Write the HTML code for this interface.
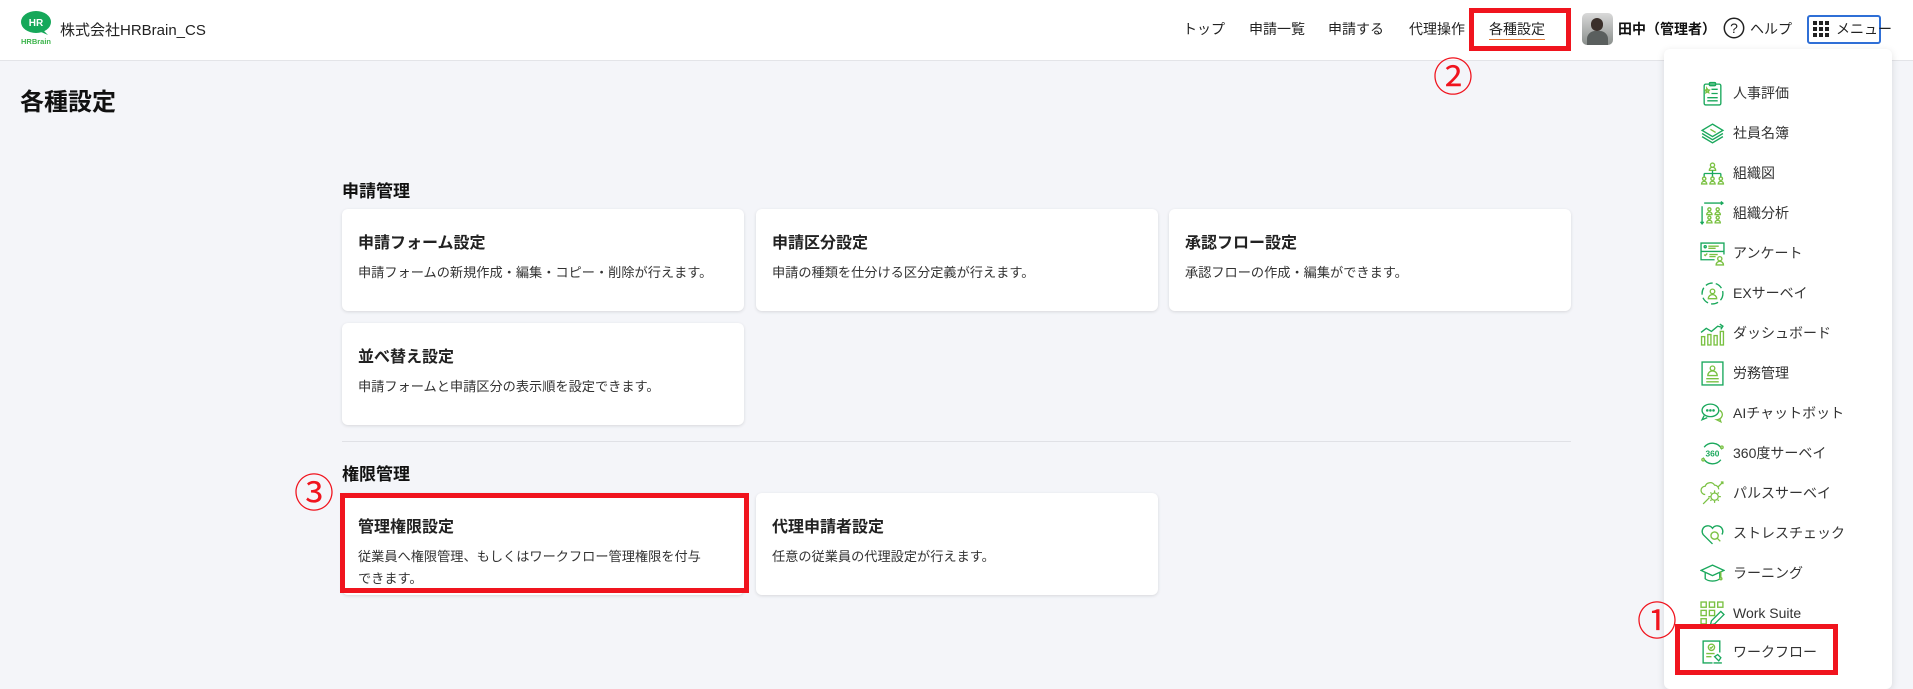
<!DOCTYPE html>
<html><head><meta charset="utf-8">
<style>
*{box-sizing:border-box;margin:0;padding:0}
body{width:1913px;height:675px;overflow:hidden;background:#f4f5f9;font-family:"Liberation Sans","Noto Sans CJK JP",sans-serif;color:#222;position:relative}
.hdr{position:absolute;left:0;top:0;width:1913px;height:61px;background:#fff;border-bottom:1px solid #e3e4e8}
.abs{position:absolute;white-space:nowrap}
.nav{font-size:14px;color:#222;top:19px}
h1{position:absolute;left:20px;top:82px;font-size:24px;font-weight:bold;color:#111}
.sec{position:absolute;font-size:17px;font-weight:bold;color:#111}
.card{position:absolute;background:#fff;border-radius:6px;box-shadow:0 1px 3px rgba(0,0,0,.12);width:402px;height:102px;padding:20px 16px}
.card b{display:block;font-size:16px;color:#222;margin-bottom:9px}
.card p{font-size:13.2px;color:#333;line-height:22px}
.red{position:absolute;border:5px solid #f0141e}
.circ{position:absolute;color:#f0141e;font-size:40px;line-height:1;font-family:"Noto Sans CJK JP",sans-serif}
.menu{position:absolute;left:1664px;top:49px;width:228px;height:640px;background:#fff;border-radius:6px;box-shadow:0 2px 8px rgba(0,0,0,.12)}
.mi{position:absolute;left:1700px;height:28px;display:flex;align-items:center;font-size:14px;color:#333;white-space:nowrap}
.mi svg{width:25px;height:25px;margin-right:8px;flex:none}
</style></head><body>
<div class="hdr"></div>
<svg class="abs" style="left:19px;top:10px" width="34" height="36" viewBox="0 0 34 36"><ellipse cx="17" cy="12" rx="15" ry="11" fill="#16a85a"/><path d="M24 20 L29 25 L22 22z" fill="#16a85a"/><text x="17" y="16" font-size="10" font-weight="bold" fill="#fff" text-anchor="middle" font-family="Liberation Sans">HR</text><text x="17" y="34" font-size="7.5" font-weight="bold" fill="#3cb44b" text-anchor="middle" font-family="Liberation Sans">HRBrain</text></svg>
<div class="abs" style="left:60px;top:19px;font-size:15px;color:#222">株式会社HRBrain_CS</div>

<div class="abs nav" style="left:1183px">トップ</div>
<div class="abs nav" style="left:1249px">申請一覧</div>
<div class="abs nav" style="left:1328px">申請する</div>
<div class="abs nav" style="left:1409px">代理操作</div>
<div class="abs nav" style="left:1489px">各種設定</div>
<div class="abs" style="left:1489px;top:39px;width:56px;height:1px;background:#e07a3a"></div>
<div class="abs" style="left:1566px;top:15px;width:1px;height:30px;background:#ddd"></div>
<div class="abs" style="left:1582px;top:13px;width:31px;height:32px;border-radius:5px;background:linear-gradient(#d9d9d9,#8a8f8c);overflow:hidden"><div style="position:absolute;left:9px;top:5px;width:12px;height:13px;border-radius:6px;background:#3a2f2a"></div><div style="position:absolute;left:5px;top:18px;width:21px;height:16px;border-radius:8px 8px 0 0;background:#5a5f5e"></div></div>
<div class="abs" style="left:1618px;top:19px;font-size:14px;font-weight:bold;color:#111">田中（管理者）</div>
<svg class="abs" style="left:1723px;top:17px" width="22" height="22" viewBox="0 0 22 22"><circle cx="11" cy="11" r="9.7" fill="none" stroke="#222" stroke-width="1.5"/><text x="11" y="16" font-size="14" text-anchor="middle" fill="#222" font-family="Liberation Sans">?</text></svg>
<div class="abs nav" style="left:1750px">ヘルプ</div>
<div class="abs" style="left:1807px;top:15px;width:74px;height:29px;border:2px solid #2f6fd6;border-radius:3px;background:#fff"></div>
<svg class="abs" style="left:1813px;top:21px" width="16" height="16" viewBox="0 0 16 16" fill="#222"><rect x="0" y="0" width="4" height="4"/><rect x="6" y="0" width="4" height="4"/><rect x="12" y="0" width="4" height="4"/><rect x="0" y="6" width="4" height="4"/><rect x="6" y="6" width="4" height="4"/><rect x="12" y="6" width="4" height="4"/><rect x="0" y="12" width="4" height="4"/><rect x="6" y="12" width="4" height="4"/><rect x="12" y="12" width="4" height="4"/></svg>
<div class="abs nav" style="left:1836px">メニュー</div>

<h1>各種設定</h1>
<div class="sec" style="left:342px;top:177px">申請管理</div>
<div class="card" style="left:342px;top:209px"><b>申請フォーム設定</b><p>申請フォームの新規作成・編集・コピー・削除が行えます。</p></div>
<div class="card" style="left:756px;top:209px"><b>申請区分設定</b><p>申請の種類を仕分ける区分定義が行えます。</p></div>
<div class="card" style="left:1169px;top:209px"><b>承認フロー設定</b><p>承認フローの作成・編集ができます。</p></div>
<div class="card" style="left:342px;top:323px"><b>並べ替え設定</b><p>申請フォームと申請区分の表示順を設定できます。</p></div>
<div class="abs" style="left:342px;top:441px;width:1229px;height:1px;background:#e0e1e6"></div>
<div class="sec" style="left:342px;top:460px">権限管理</div>
<div class="card" style="left:342px;top:493px"><b>管理権限設定</b><p>従業員へ権限管理、もしくはワークフロー管理権限を付与<br>できます。</p></div>
<div class="card" style="left:756px;top:493px"><b>代理申請者設定</b><p>任意の従業員の代理設定が行えます。</p></div>
<div class="red" style="left:340px;top:493px;width:409px;height:100px"></div>
<div class="circ" style="left:294px;top:470px">③</div>

<div class="red" style="left:1469px;top:8px;width:102px;height:43px"></div>
<div class="circ" style="left:1433px;top:54px">②</div>

<div class="menu"></div>
<div class="mi" style="top:79px"><svg viewBox="0 0 24 24" fill="none" stroke="#1aa85c" stroke-width="1.3"><rect x="4" y="3" width="16" height="20" rx="1.5"/><rect x="9" y="1.5" width="6" height="3" rx="1"/><path d="M11 8h6M11 12h6M7 16h10M7 19h10"/><path d="M6.5 7l1 1.5 1.5.2-1 1 .3 1.5-1.3-.7-1.3.7.3-1.5-1-1 1.5-.2z" stroke="#7ac142"/></svg>人事評価</div>
<div class="mi" style="top:119px"><svg viewBox="0 0 24 24" fill="none" stroke="#1aa85c" stroke-width="1.3"><path d="M12 3l10 6-10 6-10-6z"/><path d="M2 12l10 6 10-6M2 15l10 6 10-6"/><path d="M10 8l5 3" stroke="#7ac142"/></svg>社員名簿</div>
<div class="mi" style="top:159px"><svg viewBox="0 0 24 24" fill="none" stroke="#7ac142" stroke-width="1.3"><circle cx="12" cy="4" r="2"/><path d="M9 9a3 3 0 016 0z"/><path d="M12 9v3M4 12h16M4 12v3M12 12v3M20 12v3" stroke="#1aa85c"/><circle cx="4" cy="17" r="1.6"/><circle cx="12" cy="17" r="1.6"/><circle cx="20" cy="17" r="1.6"/><path d="M1.5 22a2.5 2.5 0 015 0zM9.5 22a2.5 2.5 0 015 0zM17.5 22a2.5 2.5 0 015 0z"/></svg>組織図</div>
<div class="mi" style="top:199px"><svg viewBox="0 0 24 24" fill="none" stroke="#7ac142" stroke-width="1.3"><path d="M4 2h18M20 0.5L22 2l-2 1.5M2 5v17M0.5 20L2 22l1.5-2" stroke="#1aa85c"/><circle cx="9" cy="8" r="1.5"/><circle cx="17" cy="8" r="1.5"/><circle cx="9" cy="16" r="1.5"/><circle cx="17" cy="16" r="1.5"/><path d="M6.5 13a2.5 2.5 0 015 0zM14.5 13a2.5 2.5 0 015 0zM6.5 21a2.5 2.5 0 015 0zM14.5 21a2.5 2.5 0 015 0z"/></svg>組織分析</div>
<div class="mi" style="top:239px"><svg viewBox="0 0 24 24" fill="none" stroke="#1aa85c" stroke-width="1.3"><path d="M14 18H1V2h22v11M1 10h22"/><circle cx="5" cy="5.5" r="1"/><path d="M8 5h10M8 7h7M4 13l1 1 2-2M9 13h8M9 15h6" stroke="#7ac142"/><circle cx="19" cy="17" r="2" stroke="#7ac142"/><path d="M15.5 23a3.5 3.5 0 017 0z" stroke="#7ac142"/></svg>アンケート</div>
<div class="mi" style="top:279px"><svg viewBox="0 0 24 24" fill="none" stroke="#1aa85c" stroke-width="1.3"><circle cx="12" cy="12" r="10" stroke-dasharray="7 3"/><circle cx="12" cy="10" r="2.2" stroke="#7ac142"/><path d="M8 17a4 4 0 018 0z" stroke="#7ac142"/></svg>EXサーベイ</div>
<div class="mi" style="top:319px"><svg viewBox="0 0 24 24" fill="none" stroke="#7ac142" stroke-width="1.3"><rect x="1.5" y="15" width="3" height="8"/><rect x="7.5" y="13" width="3" height="10"/><rect x="13.5" y="14" width="3" height="9"/><rect x="19.5" y="10" width="3" height="13"/><path d="M1 11l5-4 5 3 6-5 4 1M19 3l3 2-2 3" stroke="#1aa85c"/></svg>ダッシュボード</div>
<div class="mi" style="top:359px"><svg viewBox="0 0 24 24" fill="none" stroke="#1aa85c" stroke-width="1.3"><rect x="2" y="1" width="20" height="22"/><circle cx="12" cy="7" r="2.2" stroke="#7ac142"/><path d="M7.5 14a4.5 4.5 0 019 0zM6 17h12M6 20h12" stroke="#7ac142"/></svg>労務管理</div>
<div class="mi" style="top:399px"><svg viewBox="0 0 24 24" fill="none" stroke="#1aa85c" stroke-width="1.3"><ellipse cx="10" cy="9" rx="8" ry="6"/><path d="M4 14l-2 4 5-2"/><path d="M19 9a6 5 0 01-3 9l4 2-1-3" stroke="#7ac142"/><circle cx="7" cy="9" r=".6" fill="#7ac142"/><circle cx="10" cy="9" r=".6" fill="#7ac142"/><circle cx="13" cy="9" r=".6" fill="#7ac142"/></svg>AIチャットボット</div>
<div class="mi" style="top:439px"><svg viewBox="0 0 24 24" fill="none" stroke="#1aa85c" stroke-width="1.3"><path d="M4 6a10 10 0 0117 2M20 18a10 10 0 01-17-2"/><circle cx="21" cy="6" r="1.2" stroke="#7ac142"/><circle cx="3" cy="18" r="1.2" stroke="#7ac142"/><text x="12" y="15" font-size="8" font-weight="bold" fill="#1aa85c" stroke="none" text-anchor="middle" font-family="Liberation Sans">360</text></svg>360度サーベイ</div>
<div class="mi" style="top:479px"><svg viewBox="0 0 24 24" fill="none" stroke="#7ac142" stroke-width="1.2"><path d="M5 13a4 4 0 010-8 5 5 0 019-1 4 4 0 014 4"/><circle cx="14" cy="15" r="3.5"/><path d="M14 9v2M14 19v2M8 15h2M18 15h2M10 11l1 1M18 11l-1 1M10 19l1-1M18 19l-1-1M3 22l6-6M17 6l5-5M20 1h2v2" /></svg>パルスサーベイ</div>
<div class="mi" style="top:519px"><svg viewBox="0 0 24 24" fill="none" stroke="#1aa85c" stroke-width="1.3"><path d="M12 22L3 13a5 5 0 019-6 5 5 0 019 6"/><circle cx="14" cy="14" r="3.5" stroke="#7ac142"/><path d="M16.5 16.5l3 3" stroke="#7ac142"/></svg>ストレスチェック</div>
<div class="mi" style="top:559px"><svg viewBox="0 0 24 24" fill="none" stroke="#1aa85c" stroke-width="1.3"><path d="M12 4l11 5-11 5L1 9z"/><path d="M5 11v6c3 3 11 3 14 0v-6"/><path d="M20 10v6" stroke="#7ac142"/><circle cx="20" cy="17" r="1" stroke="#7ac142"/></svg>ラーニング</div>
<div class="mi" style="top:599px"><svg viewBox="0 0 24 24" fill="none" stroke="#7ac142" stroke-width="1.3"><rect x="1" y="1" width="5" height="5"/><rect x="9" y="1" width="5" height="5"/><rect x="17" y="1" width="5" height="5"/><rect x="1" y="9" width="5" height="5"/><rect x="9" y="9" width="5" height="5"/><rect x="1" y="17" width="5" height="5"/><path d="M10 23l1-4 9-9 3 3-9 9z" stroke="#1aa85c"/></svg>Work Suite</div>
<div class="mi" style="top:638px"><svg viewBox="0 0 24 24" fill="none" stroke="#1aa85c" stroke-width="1.3"><path d="M12 22H3V1h16v11"/><circle cx="11" cy="7" r="3" stroke="#7ac142"/><path d="M9.5 7l1 1 2-2M6 13h8M6 16h5" stroke="#7ac142"/><path d="M14 16l3-2 3 3-2 3zM13 22h8" /></svg>ワークフロー</div>
<div class="red" style="left:1675px;top:624px;width:163px;height:51px"></div>
<div class="circ" style="left:1637px;top:598px">①</div>
</body></html>
